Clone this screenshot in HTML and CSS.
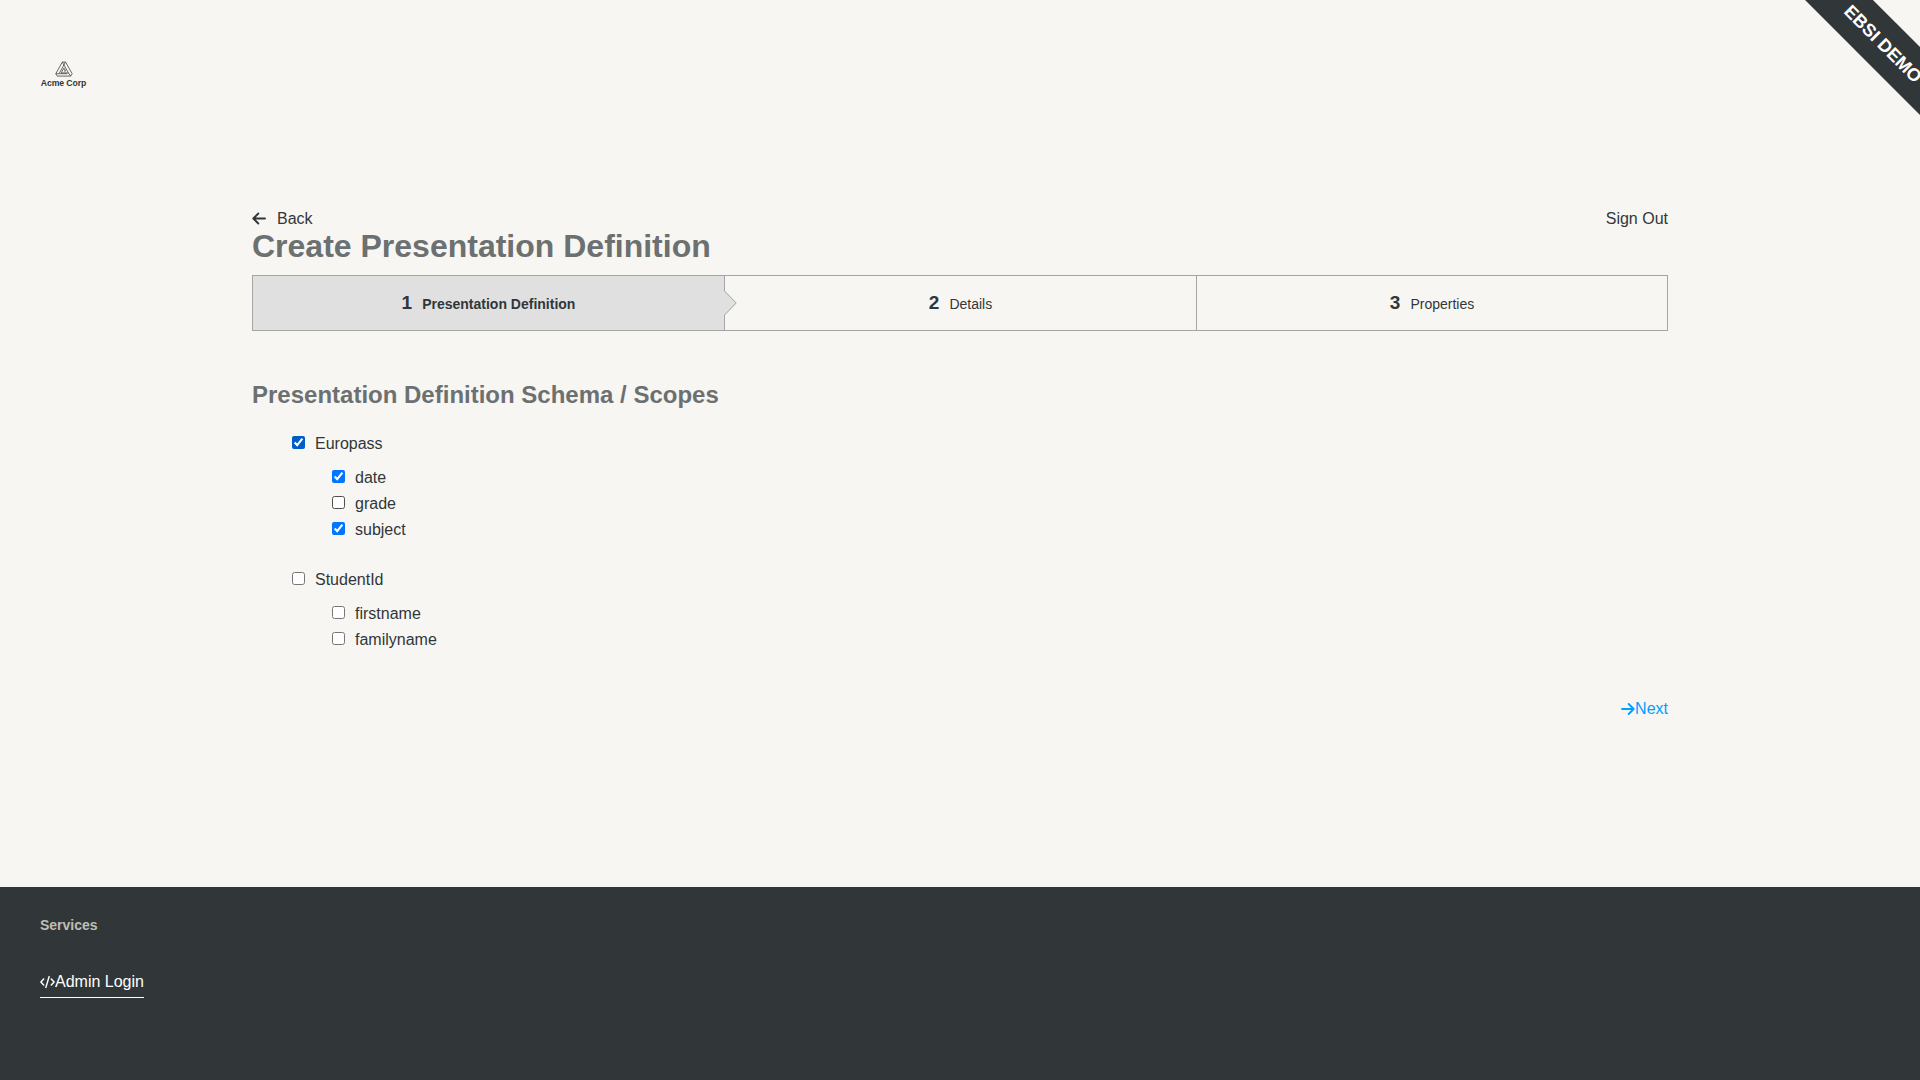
FILE: index.html
```html
<!DOCTYPE html>
<html lang="en">
<head>
<meta charset="utf-8">
<title>Create Presentation Definition</title>
<link rel="stylesheet" href="styles.css">
</head>
<body>
<div class="ribbon">EBSI DEMO</div>
<header class="header">
  <div class="logo">
    <svg class="logo-mark" viewBox="0 0 18 16" fill="none" stroke="#444" stroke-width="0.8" stroke-linejoin="round">
      <path d="M7.3 1h3.2l6.7 11.7-1.5 2.4H2.2L.8 12.7z"/>
      <path d="M7.3 1l6.1 10.9H6.2M10.5 1L4.3 12.2M.8 12.7h11.4M8.9 7l-2.7 4.9M8.9 7l1.7 3H9M13.4 11.9l2.3 3.2"/>
    </svg>
    <span class="logo-name">Acme Corp</span>
  </div>
</header>
<main class="main">
  <nav class="topnav">
    <a class="back"><svg class="arrow" viewBox="0 0 14 14" fill="none" stroke="currentColor" stroke-width="1.9" stroke-linecap="round" stroke-linejoin="round"><path d="M13 6.5H1.5M6.3 1.5L1.3 6.5l5 5"/></svg>Back</a>
    <a>Sign Out</a>
  </nav>
  <h1 class="title">Create Presentation Definition</h1>
  <ol class="steps">
    <li class="step step-active"><span class="num">1</span><span class="label">Presentation Definition</span>
      <svg class="pointer" viewBox="0 0 14 26"><path d="M0 1h1L12.5 13 1 25H0z" fill="#e0e0e0"/><path d="M.5 1L12.2 13 .5 25" fill="none" stroke="#a5a5a5"/></svg>
    </li>
    <li class="step"><span class="num">2</span><span class="label">Details</span></li>
    <li class="step"><span class="num">3</span><span class="label">Properties</span></li>
  </ol>
  <h2 class="subtitle">Presentation Definition Schema / Scopes</h2>
  <div class="group">
    <label class="row"><input class="check check-dark" type="checkbox" checked>Europass</label>
    <div class="scopes">
      <label class="row"><input class="check" type="checkbox" checked>date</label>
      <label class="row"><input class="check check-outline" type="checkbox">grade</label>
      <label class="row"><input class="check" type="checkbox" checked>subject</label>
    </div>
  </div>
  <div class="group">
    <label class="row"><input class="check" type="checkbox">StudentId</label>
    <div class="scopes">
      <label class="row"><input class="check" type="checkbox">firstname</label>
      <label class="row"><input class="check" type="checkbox">familyname</label>
    </div>
  </div>
  <a class="next"><svg class="arrow" viewBox="0 0 14 14" fill="none" stroke="currentColor" stroke-width="1.9" stroke-linecap="round" stroke-linejoin="round"><path d="M1 7h11.5M7.7 2l5 5-5 5"/></svg>Next</a>
</main>
<footer class="footer">
  <h3 class="services">Services</h3>
  <a class="admin"><svg class="code" viewBox="0 0 15 14" fill="none" stroke="currentColor" stroke-width="1.5" stroke-linecap="round" stroke-linejoin="round"><path d="M3.7 4L.9 7l2.8 3M11.3 4l2.8 3-2.8 3M9.1 1.6L5.9 12.4"/></svg>Admin Login</a>
</footer>
</body>
</html>
```
FILE: styles.css
```css
* { box-sizing: border-box; }
html, body { height: 100%; overflow: hidden; }
body {
  margin: 0;
  display: flex;
  flex-direction: column;
  position: relative;
  background: #f7f6f2;
  color: #313639;
  font: 16px/26px "Liberation Sans", Arial, sans-serif;
}
.ribbon {
  position: absolute;
  top: 20px;
  right: -163px;
  width: 400px;
  height: 48px;
  line-height: 48px;
  background: #313639;
  color: #fff;
  font-size: 18px;
  font-weight: 700;
  text-align: center;
  transform: rotate(45deg);
}
.header { height: 206px; padding: 61px 40px 0; }
.logo { width: 47px; display: flex; flex-direction: column; align-items: center; }
.logo-mark { width: 18px; height: 16px; display: block; }
.logo-name { font-size: 8.7px; letter-spacing: -0.1px; font-weight: 700; line-height: 13px; white-space: nowrap; }
.main { flex: 1; padding: 0 252px; }
.topnav { display: flex; justify-content: space-between; }
.back { display: flex; align-items: center; gap: 11px; }
.arrow { width: 14px; height: 14px; }
.title { margin: -4px 0 10px; font-size: 32px; line-height: 37px; color: #6c7071; }
.steps {
  display: grid;
  grid-template-columns: repeat(3, 1fr);
  height: 56px;
  margin: 0;
  padding: 0;
  list-style: none;
  border: solid #a5a5a5;
  border-width: 1px 0;
}
.step {
  position: relative;
  display: flex;
  align-items: baseline;
  justify-content: center;
  gap: 10px;
  padding-top: 14px;
  border-left: 1px solid #a5a5a5;
  font-size: 14px;
}
.step:last-child { border-right: 1px solid #a5a5a5; }
.step-active { background: #e0e0e0; font-weight: 700; }
.num { font-size: 19px; font-weight: 700; }
.pointer { position: absolute; z-index: 1; right: -14px; top: 14px; width: 14px; height: 26px; }
.subtitle { margin: 48px 0 20px; font-size: 24px; line-height: 32px; color: #6c7071; }
.group { padding-left: 40px; margin-bottom: 24px; }
.scopes { padding-left: 40px; margin-top: 8px; }
.row { display: flex; align-items: center; gap: 10px; height: 26px; }
.check { width: 13px; height: 13px; margin: 0 0 3px; }
.check-dark { accent-color: #005cc8; }
.check-outline { appearance: none; background: #fff; border: 1px solid #4f4f4f; border-radius: 2.5px; }
.next { display: flex; align-items: center; justify-content: flex-end; margin-top: 43px; color: #00a0ff; }
.footer { height: 193px; padding: 25px 40px; background: #313639; color: #fff; }
.services { margin: 0 0 30px; font-size: 14px; line-height: 26px; color: #bfbfb3; }
.admin { display: inline-flex; align-items: center; height: 30px; padding-bottom: 2px; border-bottom: 1px solid #fff; }
.code { width: 15px; height: 14px; }
```
